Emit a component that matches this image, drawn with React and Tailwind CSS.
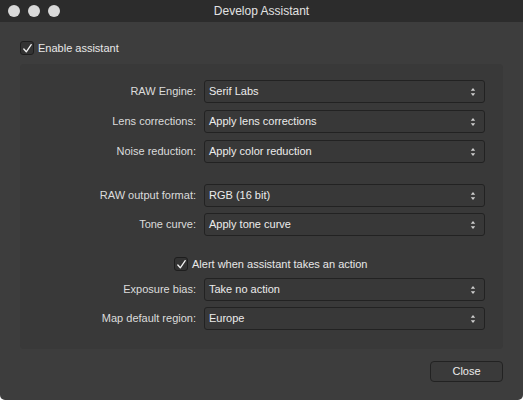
import React from "react";

function Check({ className = "" }) {
  return (
    <span className={"flex h-[14px] w-[14px] items-center justify-center rounded-[3px] border border-[#1e1e1e] bg-[#333] " + className}>
      <svg width="11" height="11" viewBox="0 0 11 11" fill="none">
        <path d="M1.8 6 L4.3 8.8 L9.2 1.6" stroke="#f2f2f2" strokeWidth="1.3" strokeLinecap="round" strokeLinejoin="round" />
      </svg>
    </span>
  );
}

function Row({ label, value }) {
  return (
    <div className="flex h-[23px] items-center">
      <div className="w-[184px] pr-[8px] text-right text-[#dcdcdc]">{label}</div>
      <div className="flex h-[23px] w-[281px] items-center justify-between rounded-[3px] border border-[#222] bg-[#383838] pl-[4px] pr-[8px] text-[#ececec]">
        <span>{value}</span>
        <svg width="6" height="10" viewBox="0 0 6 10">
          <path d="M3 1 L5.2 3.8 L0.8 3.8 Z" fill="#cfcfcf" />
          <path d="M3 9 L5.2 6.2 L0.8 6.2 Z" fill="#cfcfcf" />
        </svg>
      </div>
    </div>
  );
}

export default function App() {
  return (
    <div
      className="h-[400px] w-[523px] overflow-hidden rounded-b-[5px] bg-[#3d3d3d] text-[11px]"
      style={{ fontFamily: '"Liberation Sans", Arial, sans-serif' }}
    >
      <div className="relative flex h-[22px] items-center justify-center bg-[#2c2c2c] text-[12px] text-[#e2e2e2]">
        <div className="absolute left-[8px] top-[5px] flex gap-[8px]">
          <span className="h-[12px] w-[12px] rounded-full bg-[#d9d9d9]" />
          <span className="h-[12px] w-[12px] rounded-full bg-[#d9d9d9]" />
          <span className="h-[12px] w-[12px] rounded-full bg-[#d9d9d9]" />
        </div>
        <span>Develop Assistant</span>
      </div>

      <div className="px-[20px] pt-[19px]">
        <div className="flex h-[14px] items-center gap-[4px] text-[#e8e8e8]">
          <Check />
          <span>Enable assistant</span>
        </div>

        <div className="mt-[9px] h-[285px] rounded-[4px] bg-[#393939] pt-[16px]">
          <div className="flex flex-col gap-[7px]">
            <Row label="RAW Engine:" value="Serif Labs" />
            <Row label="Lens corrections:" value="Apply lens corrections" />
            <Row label="Noise reduction:" value="Apply color reduction" />
          </div>
          <div className="mt-[21px] flex flex-col gap-[6px]">
            <Row label="RAW output format:" value="RGB (16 bit)" />
            <Row label="Tone curve:" value="Apply tone curve" />
          </div>
          <div className="mt-[21px] flex h-[14px] items-center gap-[4px] pl-[154px] text-[#e8e8e8]">
            <Check />
            <span>Alert when assistant takes an action</span>
          </div>
          <div className="mt-[7px] flex flex-col gap-[6px]">
            <Row label="Exposure bias:" value="Take no action" />
            <Row label="Map default region:" value="Europe" />
          </div>
        </div>

        <div className="mt-[12px] flex justify-end">
          <div className="flex h-[21px] w-[73px] items-center justify-center rounded-[4px] border border-[#222] bg-[#3a3a3a] text-[#ececec]">
            Close
          </div>
        </div>
      </div>
    </div>
  );
}
